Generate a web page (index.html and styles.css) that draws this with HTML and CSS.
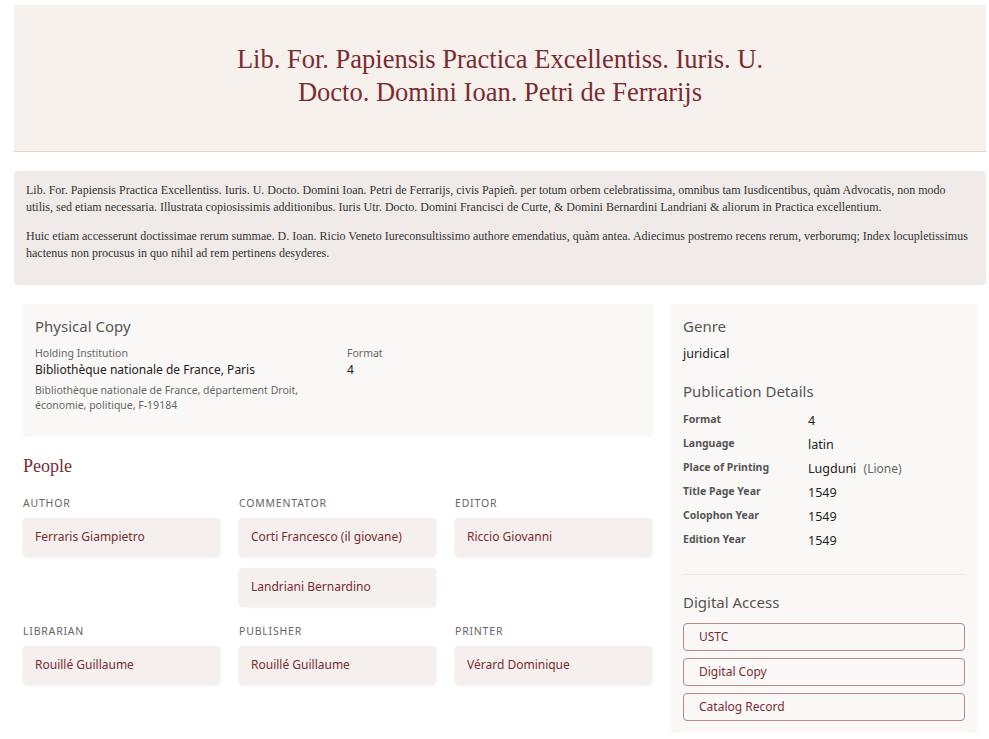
FILE: index.html
```html
<!DOCTYPE html>
<html lang="en">
<head>
<meta charset="utf-8">
<title>Lib. For. Papiensis Practica</title>
<link rel="stylesheet" href="styles.css">
</head>
<body>
<div class="page">
  <header class="hero">
    <h1 class="hero-title">Lib. For. Papiensis Practica Excellentiss. Iuris. U.<br>Docto. Domini Ioan. Petri de Ferrarijs</h1>
  </header>

  <section class="desc">
    <p>Lib. For. Papiensis Practica Excellentiss. Iuris. U. Docto. Domini Ioan. Petri de Ferrarijs, civis Papieñ. per totum orbem celebratissima, omnibus tam Iusdicentibus, quàm Advocatis, non modo utilis, sed etiam necessaria. Illustrata copiosissimis additionibus. Iuris Utr. Docto. Domini Francisci de Curte, &amp; Domini Bernardini Landriani &amp; aliorum in Practica excellentium.</p>
    <p>Huic etiam accesserunt doctissimae rerum summae. D. Ioan. Ricio Veneto Iureconsultissimo authore emendatius, quàm antea. Adiecimus postremo recens rerum, verborumq; Index locupletissimus hactenus non procusus in quo nihil ad rem pertinens desyderes.</p>
  </section>

  <div class="main">
    <div class="left">
      <section class="card physical">
        <h2 class="card-title">Physical Copy</h2>
        <div class="phys-grid">
          <div>
            <div class="field-label">Holding Institution</div>
            <div class="field-value">Bibliothèque nationale de France, Paris</div>
            <div class="field-sub">Bibliothèque nationale de France, département Droit, économie, politique, F-19184</div>
          </div>
          <div>
            <div class="field-label">Format</div>
            <div class="field-value">4</div>
          </div>
        </div>
      </section>

      <h2 class="people-title">People</h2>
      <div class="people-grid">
        <div class="role">
          <div class="role-label">Author</div>
          <div class="person">Ferraris Giampietro</div>
        </div>
        <div class="role">
          <div class="role-label">Commentator</div>
          <div class="person">Corti Francesco (il giovane)</div>
          <div class="person">Landriani Bernardino</div>
        </div>
        <div class="role">
          <div class="role-label">Editor</div>
          <div class="person">Riccio Giovanni</div>
        </div>
        <div class="role">
          <div class="role-label">Librarian</div>
          <div class="person">Rouillé Guillaume</div>
        </div>
        <div class="role">
          <div class="role-label">Publisher</div>
          <div class="person">Rouillé Guillaume</div>
        </div>
        <div class="role">
          <div class="role-label">Printer</div>
          <div class="person">Vérard Dominique</div>
        </div>
      </div>
    </div>

    <aside class="card side">
      <h2 class="card-title">Genre</h2>
      <div class="genre">juridical</div>

      <div class="details">
        <h2 class="card-title details-title">Publication Details</h2>
        <div class="row"><span class="row-label">Format</span><span class="row-value">4</span></div>
        <div class="row"><span class="row-label">Language</span><span class="row-value">latin</span></div>
        <div class="row"><span class="row-label">Place of Printing</span><span class="row-value">Lugduni <span class="alt">(Lione)</span></span></div>
        <div class="row"><span class="row-label">Title Page Year</span><span class="row-value">1549</span></div>
        <div class="row"><span class="row-label">Colophon Year</span><span class="row-value">1549</span></div>
        <div class="row"><span class="row-label">Edition Year</span><span class="row-value">1549</span></div>
      </div>

      <h2 class="card-title access-title">Digital Access</h2>
      <div class="links">
        <a class="link-btn" href="#">USTC</a>
        <a class="link-btn" href="#">Digital Copy</a>
        <a class="link-btn" href="#">Catalog Record</a>
      </div>
    </aside>
  </div>
</div>
</body>
</html>
```

FILE: styles.css
```css
* { box-sizing: border-box; }

html, body {
  margin: 0;
  padding: 0;
  background: #ffffff;
}

body {
  font-family: "Noto Sans", "Open Sans", sans-serif;
  color: #222;
}

.page {
  padding: 5px 3px 0 14px;
}

.hero {
  background: #f7f1ed;
  border-bottom: 1px solid #e3d6cf;
  padding: 38px 20px 42px;
  text-align: center;
}

.hero-title {
  margin: 0;
  font-family: "Liberation Serif", "Times New Roman", serif;
  font-weight: normal;
  font-size: 26.5px;
  line-height: 33px;
  color: #7a2c33;
}

.desc {
  margin-top: 19px;
  background: #f0ebe8;
  border-radius: 4px;
  padding: 11px 12px 0;
  font-family: "Liberation Serif", "Times New Roman", serif;
  font-size: 12px;
  line-height: 17px;
  color: #333;
  overflow: hidden;
}

.desc p {
  margin: 0 0 12px;
}

.desc p:last-child {
  margin-bottom: 23px;
}

.main {
  display: grid;
  grid-template-columns: 630px 306px;
  column-gap: 18px;
  padding: 0 9px;
  margin-top: 19px;
  align-items: start;
}

.card {
  background: #faf8f6;
  border-radius: 2px;
  padding: 12px;
}

.card-title {
  margin: 0;
  font-size: 15px;
  line-height: 20px;
  font-weight: normal;
  color: #555;
}

.physical {
  padding-bottom: 24px;
}

.phys-grid {
  display: grid;
  grid-template-columns: 1fr 1fr;
  column-gap: 18px;
  margin-top: 9px;
}

.field-label {
  font-size: 10.5px;
  line-height: 16px;
  color: #666;
}

.field-value {
  font-size: 12px;
  line-height: 18px;
  color: #222;
}

.field-sub {
  margin-top: 4px;
  font-size: 10.5px;
  line-height: 15px;
  color: #666;
}

.people-title {
  margin: 17px 0 0;
  font-family: "Liberation Serif", "Times New Roman", serif;
  font-weight: normal;
  font-size: 18px;
  line-height: 24px;
  color: #7a2c33;
}

.people-grid {
  display: grid;
  grid-template-columns: repeat(3, 1fr);
  column-gap: 19px;
  row-gap: 17px;
  margin-top: 17px;
  padding-right: 1px;
}

.role-label {
  font-size: 10.5px;
  line-height: 16px;
  letter-spacing: 0.8px;
  text-transform: uppercase;
  color: #666;
  margin-bottom: 7px;
}

.person {
  background: #f5f0ed;
  border-radius: 4px;
  box-shadow: 0 1px 3px rgba(0, 0, 0, 0.09);
  padding: 10px 12px;
  font-size: 12px;
  line-height: 18px;
  color: #7a2c33;
}

.person + .person {
  margin-top: 12px;
}

.side {
  padding-bottom: 12px;
}

.genre {
  margin-top: 9px;
  font-size: 12.5px;
  line-height: 18px;
  color: #222;
}

.details {
  margin-top: 18px;
  padding-bottom: 23px;
  border-bottom: 1px solid #ede9e5;
}

.details-title {
  margin-bottom: 6px;
}

.row {
  display: flex;
  align-items: center;
  height: 24px;
}

.row-label {
  width: 125px;
  flex: none;
  font-size: 10.5px;
  font-weight: bold;
  color: #555;
}

.row-value {
  font-size: 12.5px;
  color: #222;
  position: relative;
  top: 1px;
}

.alt {
  margin-left: 4px;
  font-size: 12px;
  color: #666;
}

.access-title {
  margin-top: 17px;
}

.links {
  display: flex;
  flex-direction: column;
  gap: 7px;
  margin-top: 11px;
}

.link-btn {
  display: block;
  height: 28px;
  border: 1px solid #b48c88;
  border-radius: 4px;
  padding: 0 15px;
  font-size: 12px;
  line-height: 26px;
  color: #7a2c33;
  text-decoration: none;
}
```
